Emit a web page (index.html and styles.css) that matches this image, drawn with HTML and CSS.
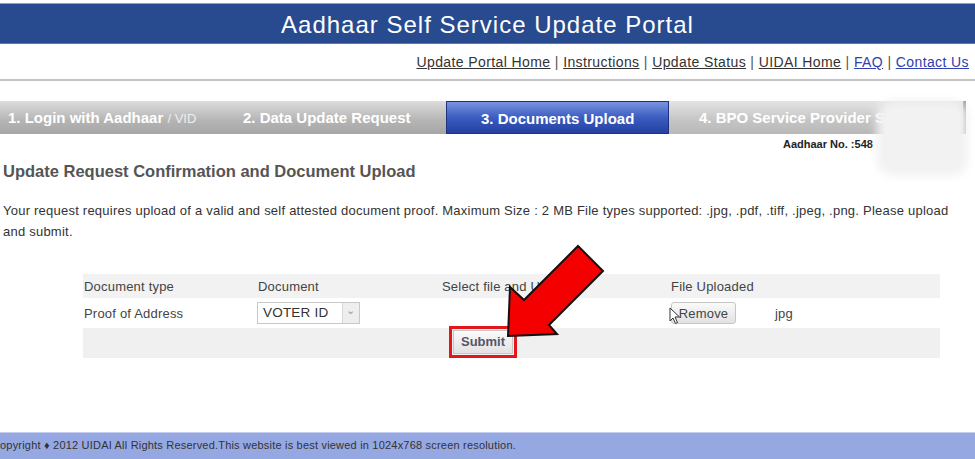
FILE: index.html
```html
<!DOCTYPE html>
<html lang="en">
<head>
  <meta charset="UTF-8">
  <title>Aadhaar Self Service Update Portal</title>
  <link rel="stylesheet" href="styles.css">
</head>
<body>
<div class="page">
  <div class="portal-header">Aadhaar Self Service Update Portal</div>

  <div class="top-links">
    <a href="#" class="link-dark">Update Portal Home</a> |
    <a href="#" class="link-dark">Instructions</a> |
    <a href="#" class="link-dark">Update Status</a> |
    <a href="#" class="link-dark">UIDAI Home</a> |
    <a href="#" class="link-blue">FAQ</a> |
    <a href="#" class="link-blue">Contact Us</a>
  </div>

  <div class="steps">
    <div class="step step-gray step-1">1. Login with Aadhaar <span class="step-light">/ VID</span></div>
    <div class="step step-gray step-2">2. Data Update Request</div>
    <div class="step step-active">3. Documents Upload</div>
    <div class="step step-gray step-4">4. BPO Service Provider S</div>
  </div>

  <div class="aadhaar-no">Aadhaar No. :548</div>

  <h2 class="section-title">Update Request Confirmation and Document Upload</h2>

  <p class="intro">Your request requires upload of a valid and self attested document proof. Maximum Size : 2 MB File types supported: .jpg, .pdf, .tiff, .jpeg, .png. Please upload and submit.</p>

  <div class="doc-table">
    <div class="doc-row doc-head">
      <div>Document type</div>
      <div>Document</div>
      <div>Select file and Upload</div>
      <div>File Uploaded</div>
      <div></div>
    </div>
    <div class="doc-row doc-item">
      <div>Proof of Address</div>
      <div>
        <div class="fake-select"><span class="fake-select-text">VOTER ID</span><span class="fake-select-arrow">&#8964;</span></div>
      </div>
      <div></div>
      <div><span class="btn btn-remove">Remove</span></div>
      <div class="file-ext">jpg</div>
    </div>
    <div class="doc-row doc-foot">
      <span class="submit-mark"><span class="btn btn-submit">Submit</span></span>
    </div>
  </div>

  <footer class="site-footer">opyright &#9830; 2012 UIDAI All Rights Reserved.This website is best viewed in 1024x768 screen resolution.</footer>

  <!-- overlays: blurred number, annotation arrow, mouse pointer -->
  <div class="blur-patch"></div>
  <svg class="big-arrow" width="110" height="100" viewBox="500 240 110 100">
    <polygon points="508,336 510,287 524,300 578,246 603,271 549,325 557,334" fill="#f40000" stroke="#111" stroke-width="2" stroke-linejoin="miter"/>
  </svg>
  <svg class="cursor" width="12" height="18" viewBox="0 0 12 18">
    <path d="M1 1 L1 14 L4 11 L6.5 16.5 L8.5 15.5 L6 10 L10.5 10 Z" fill="#fff" stroke="#333" stroke-width="1"/>
  </svg>
</div>
</body>
</html>
```

FILE: styles.css
```css
body {
  margin: 0;
  font-family: "Liberation Sans", Arial, sans-serif;
  color: #333;
  background: #fff;
}

.page {
  position: relative;
  width: 975px;
  height: 459px;
  overflow: hidden;
}

.portal-header {
  margin-top: 3px;
  height: 41px;
  line-height: 41px;
  background: #284a8f;
  border-top: 1px solid #8ea0c8;
  border-bottom: 1px solid #5d76ad;
  box-sizing: border-box;
  color: #fff;
  text-align: center;
  font-size: 24px;
  letter-spacing: 1px;
}

.top-links {
  height: 35px;
  line-height: 37px;
  text-align: right;
  padding-right: 6px;
  font-size: 14px;
  letter-spacing: 0.4px;
  color: #555;
  border-bottom: 2px solid #c4c4c4;
}
.top-links a {
  text-decoration: underline;
}
.link-dark {
  color: #333;
}
.link-blue {
  color: #3040b0;
}

.steps {
  display: flex;
  margin-top: 20px;
  height: 33px;
}
.step {
  width: 223px;
  box-sizing: border-box;
  line-height: 33px;
  font-size: 15px;
  font-weight: bold;
  color: #fff;
  white-space: nowrap;
  overflow: hidden;
}
.step-gray {
  background: linear-gradient(#dcdcdc, #b4b4b4 60%, #a6a6a6);
}
.step-1 {
  padding-left: 8px;
}
.step-2 {
  padding-left: 20px;
}
.step-active {
  background: linear-gradient(#7893e0, #3c5cc0 50%, #2540a2);
  border: 1px solid #1d3380;
  padding-left: 34px;
}
.step-4 {
  width: 297px;
  padding-left: 30px;
  background: linear-gradient(#e4e4e4, #c4c4c4 60%, #b8b8b8);
  border-right: 3px solid #999;
}
.step-light {
  font-weight: normal;
  font-size: 13px;
  color: #eee;
}

.aadhaar-no {
  padding-left: 783px;
  font-size: 11px;
  font-weight: bold;
  color: #222;
  line-height: 20px;
}

.section-title {
  margin: 7px 0 0 3px;
  font-size: 16.5px;
  color: #555;
  line-height: 20px;
}

.intro {
  margin: 19px 0 0 3px;
  padding-right: 6px;
  font-size: 13px;
  line-height: 21px;
  color: #333;
  letter-spacing: 0.23px;
}

.doc-table {
  margin: 32px 0 0 83px;
  width: 857px;
  font-size: 13px;
  letter-spacing: 0.2px;
  color: #444;
}
.doc-row {
  display: grid;
  grid-template-columns: 175px 184px 229px 104px 1fr;
  align-items: center;
}
.doc-row > div:first-child {
  padding-left: 1px;
}
.doc-head {
  height: 24px;
  background: #f2f2f2;
}
.doc-item {
  height: 30px;
}
.doc-foot {
  display: flex;
  height: 30px;
  background: #f0f0f0;
  padding-left: 366px;
}

.fake-select {
  display: flex;
  width: 103px;
  height: 22px;
  border: 1px solid #c8c8c8;
  box-sizing: border-box;
  background: #fff;
  margin-left: -1px;
}
.fake-select-text {
  flex: 1;
  padding-left: 5px;
  line-height: 20px;
  font-size: 13.5px;
  color: #333;
}
.fake-select-arrow {
  width: 16px;
  background: #eee;
  border-left: 1px solid #d6d6d6;
  color: #999;
  font-size: 11px;
  line-height: 14px;
  text-align: center;
}

.btn {
  display: inline-block;
  border: 1px solid #c6c6c6;
  border-radius: 3px;
  background: linear-gradient(#fafafa, #e2e2e2);
  font-size: 13px;
  color: #444;
}
.btn-remove {
  width: 65px;
  height: 22px;
  line-height: 21px;
  text-align: center;
  box-sizing: border-box;
}
.file-ext {
  color: #444;
}

.submit-mark {
  display: inline-block;
  margin-top: -3px;
  border: 3px solid #e5161b;
  padding: 1px;
  height: 24px;
}
.btn-submit {
  height: 22px;
  line-height: 22px;
  padding: 0 7px;
  font-weight: bold;
  color: #556;
  border-radius: 0;
  letter-spacing: 0;
}

.site-footer {
  position: absolute;
  left: 0;
  top: 432px;
  width: 100%;
  height: 27px;
  background: #96a8e2;
  border-top: 1px solid #c4cdf0;
  font-size: 11px;
  letter-spacing: 0.2px;
  line-height: 24px;
  color: #333;
}

.blur-patch {
  position: absolute;
  left: 885px;
  top: 108px;
  width: 75px;
  height: 60px;
  background: #f2f2f2;
  box-shadow: 0 0 10px 8px #f2f2f2;
  border-radius: 8px;
}

.big-arrow {
  position: absolute;
  left: 500px;
  top: 240px;
}

.cursor {
  position: absolute;
  left: 669px;
  top: 307px;
}
```
